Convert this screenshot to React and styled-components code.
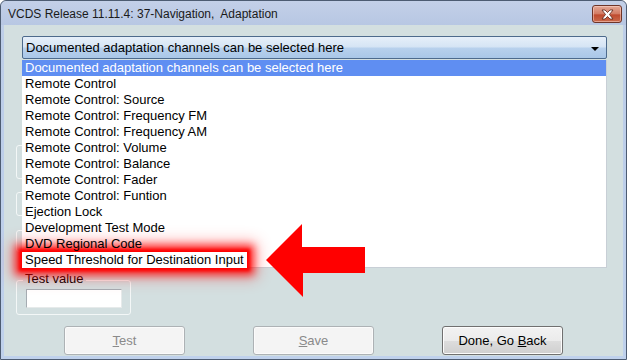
import React from "react";
import styled, { createGlobalStyle } from "styled-components";

const GlobalStyle = createGlobalStyle`
  html, body { margin: 0; padding: 0; background: #ffffff; }
  body { font-family: "Liberation Sans", Arial, sans-serif; }
  * { box-sizing: border-box; }
`;

const channels = [
  "Documented adaptation channels can be selected here",
  "Remote Control",
  "Remote Control: Source",
  "Remote Control: Frequency FM",
  "Remote Control: Frequency AM",
  "Remote Control: Volume",
  "Remote Control: Balance",
  "Remote Control: Fader",
  "Remote Control: Funtion",
  "Ejection Lock",
  "Development Test Mode",
  "DVD Regional Code",
  "Speed Threshold for Destination Input",
];

function App() {
  return (
    <>
      <GlobalStyle />
      <Window>
        <TitleBar>
          <Title>VCDS Release 11.11.4: 37-Navigation,&nbsp; Adaptation</Title>
          <CloseButton>
            <svg width="15" height="11" viewBox="0 0 15 11">
              <path
                d="M2 1 L5 1 L7.5 3.5 L10 1 L13 1 L9.5 5.5 L13 10 L10 10 L7.5 7.5 L5 10 L2 10 L5.5 5.5 Z"
                fill="#ffffff"
                stroke="#5a2418"
                strokeWidth="0.8"
              />
            </svg>
          </CloseButton>
        </TitleBar>
        <Body>
          <ComboWrap>
            <Combo>
              <span>{channels[0]}</span>
              <Caret />
            </Combo>
            <DropList>
              {channels.map((c, i) => (
                <Item key={c} selected={i === 0} marked={i === channels.length - 1}>
                  {c}
                </Item>
              ))}
            </DropList>
          </ComboWrap>

          <Groups>
            <Group h={34} />
            <Group h={24} mt={13} />
            <Group h={22} mt={14} />
            <ValueGroup>
              <Legend>Test value</Legend>
              <Field />
            </ValueGroup>
          </Groups>

          <ButtonRow>
            <Button disabled>
              <u>T</u>est
            </Button>
            <Button disabled>
              <u>S</u>ave
            </Button>
            <Button>
              Done, Go <u>B</u>ack
            </Button>
          </ButtonRow>

          <Arrow width="100" height="74" viewBox="0 0 100 74">
            <polygon points="0,36 36,0 36,23 99,23 99,49 37,49 37,73" fill="#ff0000" />
          </Arrow>
        </Body>
      </Window>
    </>
  );
}

const Window = styled.div`
  width: 627px;
  height: 360px;
  border: 1px solid #4d5c72;
  border-radius: 6px 6px 0 0;
  background: linear-gradient(#c4d2ea, #bccde8 40px, #bfd1ec);
  padding: 0 3px 3px 3px;
  display: flex;
  flex-direction: column;
  position: relative;
  overflow: hidden;
`;

const TitleBar = styled.div`
  flex: 0 0 24px;
  display: flex;
  align-items: flex-start;
  justify-content: space-between;
  background: linear-gradient(#c3d0e8, #b7c7e3);
  margin: 0 -3px;
  padding: 0 2px 0 7px;
  border-radius: 6px 6px 0 0;
`;

const Title = styled.div`
  font-family: "Liberation Sans", Arial, sans-serif;
  font-size: 12px;
  color: #1a1a1a;
  padding-top: 6px;
  white-space: nowrap;
`;

const CloseButton = styled.div`
  width: 30px;
  height: 18px;
  margin-top: 4px;
  margin-right: 2px;
  border: 1px solid #6e3528;
  border-radius: 3px;
  background: linear-gradient(#e4a896, #d27a62 50%, #bf4a2e 55%, #c96a4c);
  display: flex;
  align-items: center;
  justify-content: center;
  box-shadow: inset 0 0 0 1px rgba(255, 220, 210, 0.5);
`;

const Body = styled.div`
  flex: 1 1 auto;
  min-height: 0;
  background: #d3dfe0;
  position: relative;
  padding: 11px 16px 0 18px;
  display: flex;
  flex-direction: column;
`;

const ComboWrap = styled.div`
  position: relative;
  z-index: 2;
`;

const Combo = styled.div`
  height: 23px;
  border: 1px solid #4d6a8c;
  border-radius: 2px;
  background: linear-gradient(#e6eff9, #d6e5f5 45%, #b7d0ec 55%, #a9c7e8);
  display: flex;
  align-items: center;
  justify-content: space-between;
  padding: 0 7px 0 3px;
  font-family: "Liberation Sans", Arial, sans-serif;
  font-size: 13px;
  color: #000;
`;

const Caret = styled.span`
  width: 0;
  height: 0;
  border-left: 4px solid transparent;
  border-right: 4px solid transparent;
  border-top: 4px solid #000;
  margin-top: 2px;
`;

const DropList = styled.div`
  position: absolute;
  top: 24px;
  left: 0;
  right: 0;
  height: 208px;
  background: #ffffff;
  border-right: 1px solid #c8cfd6;
  border-bottom: 1px solid #c8cfd6;
`;

const Item = styled.div`
  height: 16px;
  line-height: 16px;
  padding-left: 3px;
  padding-right: ${(p) => (p.marked ? "3px" : "0")};
  font-family: "Liberation Sans", Arial, sans-serif;
  font-size: 13px;
  white-space: nowrap;
  color: ${(p) => (p.selected ? "#ffffff" : "#000000")};
  background: ${(p) => (p.selected ? "#5f8ef2" : "#ffffff")};
  width: ${(p) => (p.marked ? "fit-content" : "auto")};
  box-shadow: ${(p) =>
    p.marked
      ? "0 0 3px 3px #ff0000, 0 0 8px 7px rgba(255,0,0,0.75), 0 0 16px 10px rgba(255,0,0,0.3)"
      : "none"};
`;

const Groups = styled.div`
  margin-top: 86px;
  margin-left: -6px;
  display: flex;
  flex-direction: column;
  position: relative;
  z-index: 1;
`;

const Group = styled.div`
  width: 200px;
  height: ${(p) => p.h}px;
  margin-top: ${(p) => p.mt || 0}px;
  border: 1px solid #f3f7f7;
  border-radius: 3px;
`;

const ValueGroup = styled.div`
  width: 115px;
  height: 35px;
  margin-top: 28px;
  border: 1px solid #f3f7f7;
  border-radius: 3px;
  position: relative;
  padding: 8px 0 0 9px;
`;

const Legend = styled.span`
  position: absolute;
  top: -10px;
  left: 6px;
  padding: 0 2px;
  background: #d3dfe0;
  font-family: "Liberation Sans", Arial, sans-serif;
  font-size: 13px;
  color: #000;
`;

const Field = styled.div`
  width: 96px;
  height: 19px;
  background: #ffffff;
  border: 1px solid #a5acb2;
  border-right-color: #e6eaea;
  border-bottom-color: #e6eaea;
`;

const ButtonRow = styled.div`
  display: flex;
  gap: 68px;
  margin-top: 11px;
  margin-left: 42px;
`;

const Button = styled.button`
  width: 121px;
  height: 29px;
  border-radius: 3px;
  font-family: "Liberation Sans", Arial, sans-serif;
  font-size: 13px;
  padding: 0;
  border: 1px solid ${(p) => (p.disabled ? "#adb2b5" : "#707070")};
  color: ${(p) => (p.disabled ? "#8a8a8a" : "#000000")};
  background: ${(p) =>
    p.disabled
      ? "#f4f4f4"
      : "linear-gradient(#f2f2f2, #ebebeb 50%, #dddddd 52%, #cfcfcf)"};
  box-shadow: inset 0 0 0 1px ${(p) => (p.disabled ? "#fbfbfb" : "#fcfcfc")};
`;

const Arrow = styled.svg`
  position: absolute;
  left: 262px;
  top: 199px;
  z-index: 3;
`;

export default App;
